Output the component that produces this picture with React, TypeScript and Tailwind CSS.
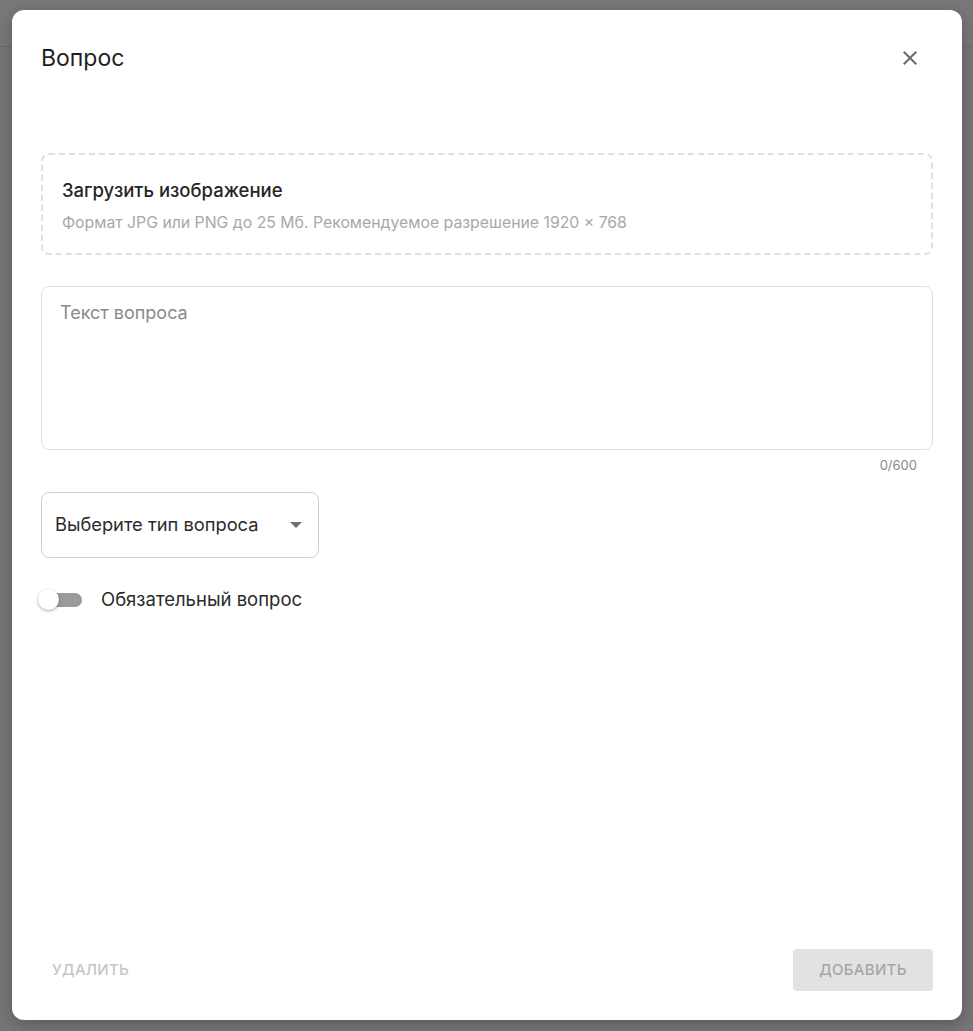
import React from "react";

export default function App() {
  return (
    <div
      className="w-[973px] h-[1031px] bg-[#767676] relative overflow-hidden"
      style={{ fontFamily: "Inter, Roboto, 'Noto Sans', Arial, sans-serif" }}
    >
      <div className="h-[47px] border-b border-[#6c6c6c] bg-[#787878]" />
      <div className="absolute left-[12px] top-[10px] w-[950px] h-[1010px] bg-white rounded-[12px] flex flex-col shadow-[0_4px_16px_rgba(0,0,0,0.25)]">
        <div className="flex items-center justify-between pl-[29px] pr-[40px] pt-[34px]">
          <h2 className="text-[23px] leading-[28px] text-[#1f1f1f] font-normal">Вопрос</h2>
          <button className="w-[24px] h-[24px] flex items-center justify-center text-[#6b6b6b]">
            <svg width="24" height="24" viewBox="0 0 24 24" fill="currentColor">
              <path d="M19 6.41 17.59 5 12 10.59 6.41 5 5 6.41 10.59 12 5 17.59 6.41 19 12 13.41 17.59 19 19 17.59 13.41 12z" />
            </svg>
          </button>
        </div>

        <div className="flex-1 flex flex-col px-[29px]">
          <div className="mt-[81px] h-[102px] border-2 border-dashed border-[#e0e0e0] rounded-[8px] pl-[19px] flex flex-col">
            <div className="mt-[23px] text-[18.5px] leading-[24px] font-medium text-[#262626]">
              Загрузить изображение
            </div>
            <div className="mt-[10px] text-[15.8px] leading-[22px] text-[#a8a8a8]">
              Формат JPG или PNG до 25 Мб. Рекомендуемое разрешение 1920 × 768
            </div>
          </div>

          <div className="mt-[31px] h-[164px] border border-[#dedede] rounded-[8px] px-[18px] pt-[14px]">
            <div className="text-[18px] leading-[24px] text-[#8a8a8a]">Текст вопроса</div>
          </div>
          <div className="flex justify-end pr-[16px] mt-[7px] text-[13px] leading-[16px] text-[#8a8a8a]">
            0/600
          </div>

          <button className="mt-[19px] w-[278px] h-[66px] border border-[#cfcfcf] rounded-[8px] flex items-center justify-between pl-[13px] pr-[16px]">
            <span className="text-[18.3px] text-[#2a2a2a]">Выберите тип вопроса</span>
            <svg width="12" height="6" viewBox="0 0 10 5" fill="#6e6e6e">
              <path d="M0 0l5 5 5-5z" />
            </svg>
          </button>

          <div className="mt-[28px] flex items-center">
            <div className="relative w-[44px] h-[20px] -ml-[3px] flex items-center">
              <div className="absolute left-[7px] right-0 h-[14px] rounded-full bg-[#9b9b9b]" />
              <div className="absolute left-0 w-[21px] h-[21px] rounded-full bg-white shadow-[0_1px_3px_rgba(0,0,0,0.35)]" />
            </div>
            <span className="ml-[19px] text-[18.5px] text-[#2a2a2a]">Обязательный вопрос</span>
          </div>
        </div>

        <div className="flex items-center justify-between px-[29px] pb-[29px]">
          <button className="h-[41px] px-[11px] text-[15px] font-medium tracking-[0.3px] text-[#c6c6c6] uppercase">
            Удалить
          </button>
          <button className="h-[42px] w-[140px] rounded-[4px] bg-[#e2e2e2] text-[15px] font-medium tracking-[0.3px] text-[#a6a6a6] uppercase">
            Добавить
          </button>
        </div>
      </div>
    </div>
  );
}
